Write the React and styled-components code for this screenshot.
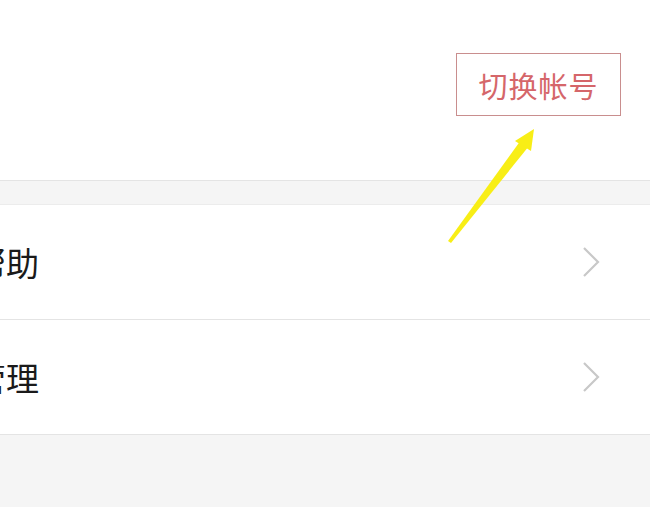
import styled, { createGlobalStyle } from "styled-components";

const Global = createGlobalStyle`
  html, body {
    margin: 0;
    padding: 0;
    background: #f5f5f5;
  }
  body {
    font-family: "Noto Sans CJK SC", "Noto Sans", sans-serif;
  }
`;

const Page = styled.div`
  position: relative;
  width: 650px;
  height: 507px;
  overflow: hidden;
  background: #f5f5f5;
`;

const Header = styled.section`
  box-sizing: border-box;
  height: 181px;
  background: #fff;
  border-bottom: 1px solid #e4e4e4;
  display: flex;
  justify-content: flex-end;
  align-items: flex-start;
  padding: 53px 29px 0 0;
`;

const SwitchButton = styled.div`
  box-sizing: border-box;
  width: 165px;
  height: 63px;
  border: 1px solid #c98e8e;
  display: flex;
  align-items: center;
  justify-content: center;
  color: #d5666a;
  font-size: 29px;
  letter-spacing: 1px;
`;

const List = styled.ul`
  list-style: none;
  margin: 23px 0 0;
  padding: 0;
  background: #fff;
  border-top: 1px solid #ececec;
`;

const Row = styled.li`
  box-sizing: border-box;
  height: 115px;
  display: flex;
  align-items: center;
  justify-content: space-between;
  padding-right: 50px;
  border-bottom: 1px solid #e4e4e4;
`;

const Label = styled.span`
  margin-left: -27px;
  font-size: 33px;
  color: #1a1a1a;
`;

const Arrow = styled.svg`
  position: absolute;
  left: 0;
  top: 0;
  pointer-events: none;
`;

function Chevron() {
  return (
    <svg width="18" height="32" viewBox="0 0 18 32">
      <path d="M2 2 L16 16 L2 30" fill="none" stroke="#c8c8c8" strokeWidth="2.2" />
    </svg>
  );
}

const rows = ["帮助", "管理"];

export default function App() {
  return (
    <Page>
      <Global />
      <Header>
        <SwitchButton>切换帐号</SwitchButton>
      </Header>
      <List>
        {rows.map((r) => (
          <Row key={r}>
            <Label>{r}</Label>
            <Chevron />
          </Row>
        ))}
      </List>
      {/* yellow annotation arrow */}
      <Arrow width="650" height="507">
        <polygon points="448,241 451,243 529,146 521,140" fill="#f8ee16" />
        <polygon points="534,129 515,141 531,151" fill="#f8ee16" />
      </Arrow>
    </Page>
  );
}
